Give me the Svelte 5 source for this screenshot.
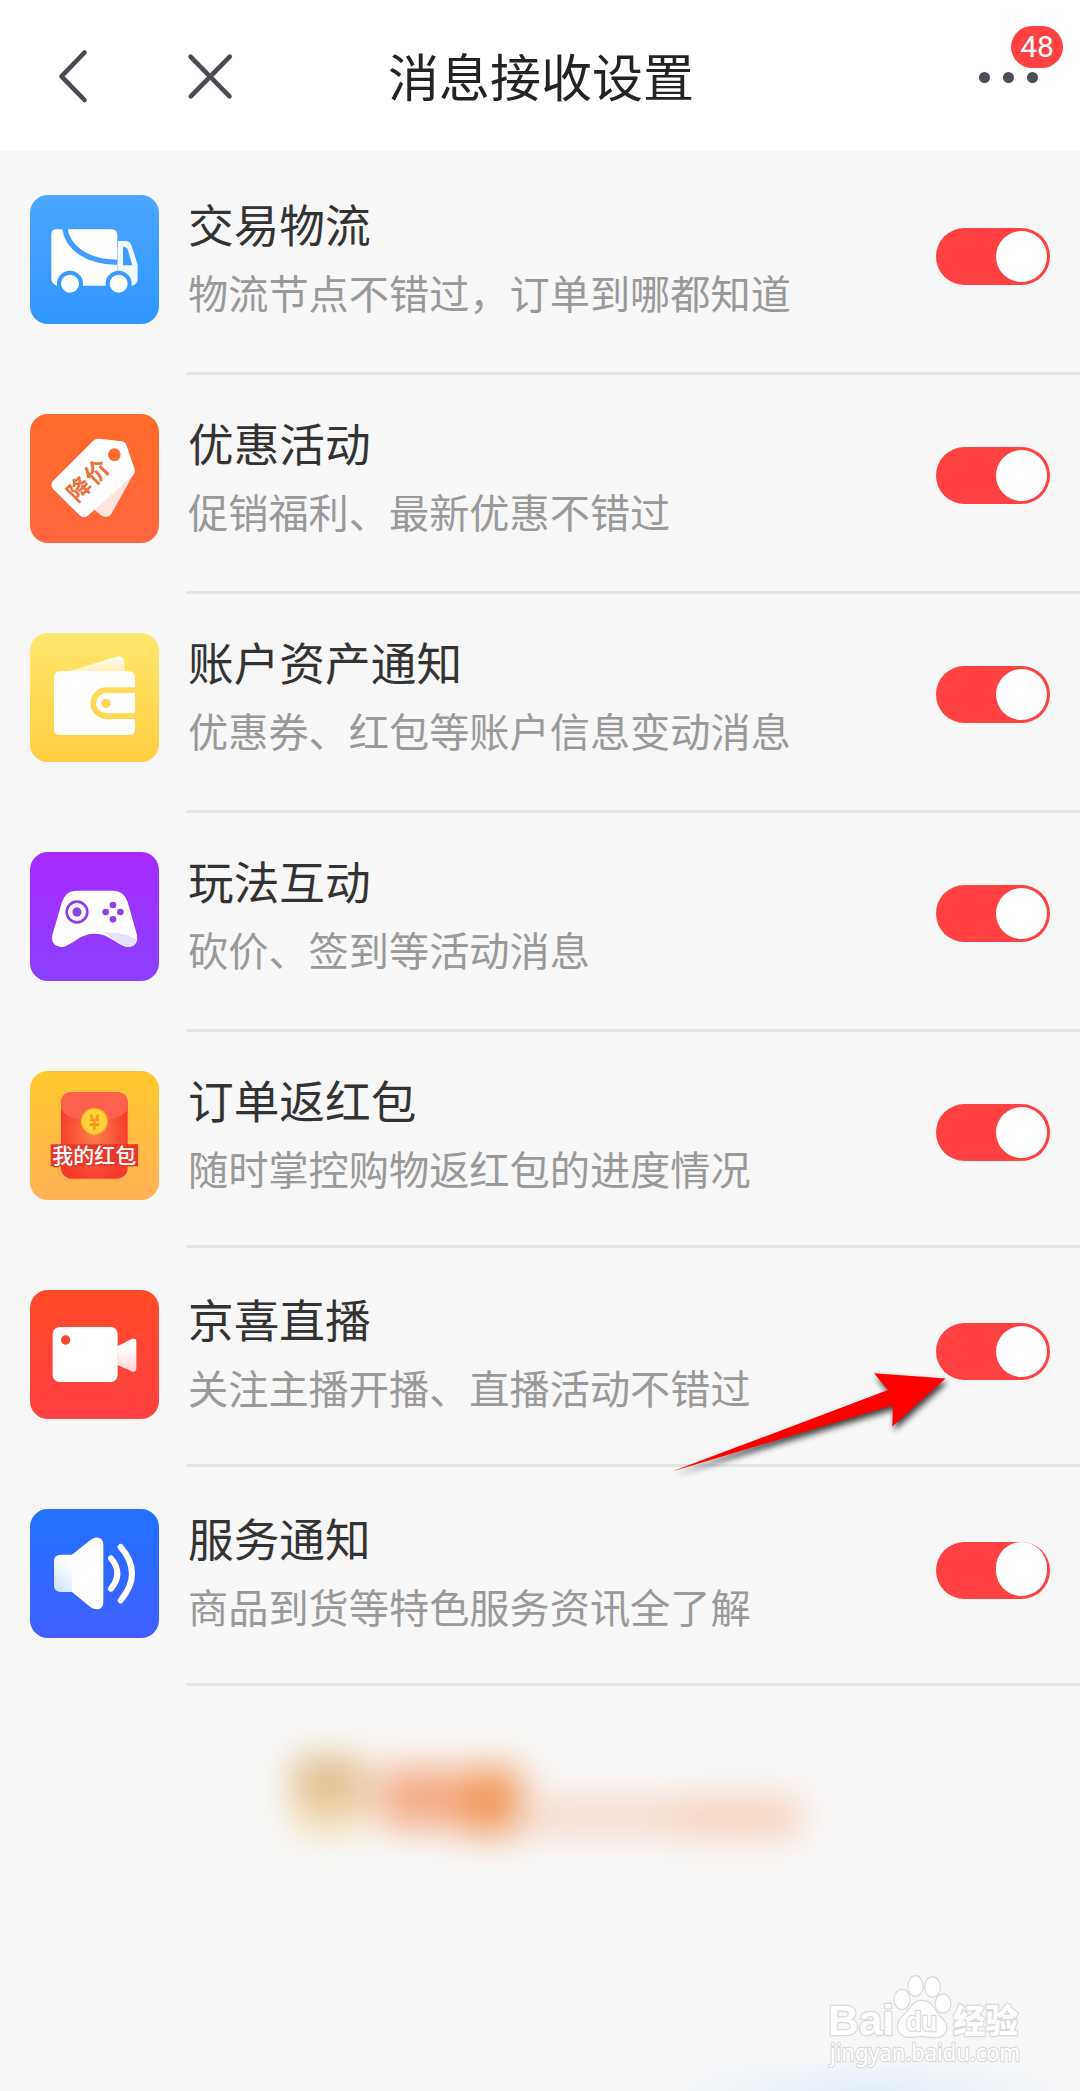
<script>
  const items = [
    { icon: 'truck', title: '交易物流', desc: '物流节点不错过，订单到哪都知道' },
    { icon: 'tag', title: '优惠活动', desc: '促销福利、最新优惠不错过' },
    { icon: 'wallet', title: '账户资产通知', desc: '优惠券、红包等账户信息变动消息' },
    { icon: 'game', title: '玩法互动', desc: '砍价、签到等活动消息' },
    { icon: 'packet', title: '订单返红包', desc: '随时掌控购物返红包的进度情况' },
    { icon: 'camera', title: '京喜直播', desc: '关注主播开播、直播活动不错过' },
    { icon: 'speaker', title: '服务通知', desc: '商品到货等特色服务资讯全了解' }
  ];
  let enabled = $state(items.map(() => true));
</script>

<div class="page">
  <header class="topbar">
    <div class="side">
      <svg class="nav back" width="40" height="60" viewBox="0 0 40 60">
        <path d="M29.5 6.5 6.5 30.3 29.5 54" />
      </svg>
      <svg class="nav" width="60" height="60" viewBox="0 0 60 60">
        <path d="M10.5 10.7 49.5 50.3M49.8 10.7 10.8 50.3" />
      </svg>
    </div>
    <h1>消息接收设置</h1>
    <div class="side right">
      <div class="more">
        <i></i><i></i><i></i>
        <span class="badge">48</span>
      </div>
    </div>
  </header>

  <main>
    {#each items as item, i}
      <section class="row">
        <div class="icon {item.icon}">
          <svg viewBox="0 0 387 387">
            {#if item.icon === 'truck'}
              <path fill="#fff" d="M80 103H244Q262 103 262 121V272H80Q64 266 64 250V119Q64 103 80 103Z" />
              <path fill="none" stroke="#439dff" stroke-width="16" d="M105 101C111 152 164 202 264 202" />
              <path fill="#f0f8ff" fill-rule="evenodd" d="M264 138H286Q300 138 304 150L323 209V252Q323 268 307 272H225L262 228ZM279 155V211H307L293 163Q290 155 279 155Z" />
              <g fill="#fff" stroke="#389aff" stroke-width="12">
                <circle cx="120" cy="266" r="33" />
                <circle cx="266" cy="266" r="33" />
              </g>
            {:else if item.icon === 'tag'}
              <path fill="#ffe3de" d="M178 274 213 304Q232 316 244 300L312 178Z" />
              <path fill="#fff" d="M190 80Q197 73 207 74L275 82Q287 84 290 95L313 163Q317 176 309 184L175 304Q162 316 149 304L70 226Q58 214 69 201Z" />
              <circle cx="253" cy="122" r="19" fill="#ff6a37" />
              <text x="176" y="198" dy="25" transform="rotate(-45 176 198)" text-anchor="middle" class="sale">降价</text>
            {:else if item.icon === 'wallet'}
              <linearGradient id="note" x1="0" y1="0" x2="0" y2="1">
                <stop offset="0" stop-color="#fffdf0" />
                <stop offset="1" stop-color="#fff0b8" />
              </linearGradient>
              <path fill="url(#note)" d="M105 118 260 71Q277 66 282 82L286 118Z" />
              <path fill="#fff" d="M91 115H296Q315 115 315 134V163H229A47 47 0 0 0 229 258H315V288Q315 306 297 306H91Q72 306 72 288V134Q72 115 91 115Z" />
              <path fill="#fff" d="M315 180H229A30 30 0 0 0 229 241H315Z" />
              <circle cx="228" cy="211" r="14" fill="#ffd557" />
            {:else if item.icon === 'game'}
              <path fill="#fff" d="M138 116H250Q282 117 293 150L321 249Q326 281 296 285 285 285 275 279C247 265 229 245 193 245S139 266 112 280Q101 287 89 284 61 279 67 249L96 150Q107 117 138 116Z" />
              <path fill="#e6e2fd" d="M220 242C260 238 301 250 319 262Q318 283 296 285 285 285 275 279C255 269 242 248 220 242Z" />
              <circle cx="141" cy="180" r="31" fill="none" stroke="#8f3fea" stroke-width="8" />
              <g fill="#8f3fea">
                <circle cx="141" cy="180" r="14" />
                <circle cx="249" cy="159" r="10" /><circle cx="249" cy="202" r="10" />
                <circle cx="227" cy="180" r="10" /><circle cx="271" cy="180" r="10" />
              </g>
            {:else if item.icon === 'packet'}
              <radialGradient id="glow" cx="0.5" cy="0.5" r="0.55">
                <stop offset="0" stop-color="#ff7d4d" />
                <stop offset="1" stop-color="#f53a2b" />
              </radialGradient>
              <rect x="93" y="64" width="200" height="259" rx="32" fill="url(#glow)" />
              <path fill="#fb614d" d="M93 115V96Q93 64 125 64H261Q293 64 293 96V115C270 162 116 162 93 115Z" />
              <circle cx="193" cy="151" r="39" fill="#ffd23c" stroke="#f9a927" stroke-width="4" />
              <path fill="none" stroke="#f29a1e" stroke-width="8" d="M182 131 188 143M205 131 199 143M179 147H208M179 161H208M193 144V176" />
              <path fill="#e9382b" d="M62 220H324V286H62Z" />
              <text x="193" y="276" text-anchor="middle" class="mine">我的红包</text>
            {:else if item.icon === 'camera'}
              <linearGradient id="lens" x1="0" y1="0" x2="0" y2="1">
                <stop offset="0.3" stop-color="#fff" />
                <stop offset="1" stop-color="#ffd2d4" />
              </linearGradient>
              <path fill="url(#lens)" d="M262 169 305 147Q319 143 319 156V234Q319 249 305 244L262 225Z" />
              <rect x="68" y="111" width="195" height="165" rx="21" fill="#fff" />
              <circle cx="107" cy="150" r="14" fill="#f9482f" />
            {:else}
              <linearGradient id="magnet" x1="0.7" y1="0" x2="0.2" y2="1">
                <stop offset="0.2" stop-color="#fff" />
                <stop offset="1" stop-color="#cfe2ff" />
              </linearGradient>
              <path fill="url(#magnet)" d="M92 137H140V249H92Q72 249 72 229V157Q72 137 92 137Z" />
              <path fill="#fff" d="M126 137 181 93Q195 81 210 88 220 94 220 107V280Q220 293 210 299 195 305 181 294L126 249Z" />
              <path fill="none" stroke="#fff" stroke-width="18" stroke-linecap="round" d="M243 148Q281 193 243 239M272 114Q340 193 272 274" />
            {/if}
          </svg>
        </div>
        <div class="body">
          <div class="texts">
            <h2>{item.title}</h2>
            <p>{item.desc}</p>
          </div>
          <button
            class="switch"
            class:on={enabled[i]}
            role="switch"
            aria-checked={enabled[i]}
            aria-label={item.title}
            onclick={() => (enabled[i] = !enabled[i])}
          ><span></span></button>
        </div>
      </section>
    {/each}
  </main>

  <div class="promo">
    <svg width="600" height="200" viewBox="0 0 600 200">
      <defs>
        <filter id="soft" x="-30%" y="-60%" width="160%" height="220%">
          <feGaussianBlur stdDeviation="18" />
        </filter>
      </defs>
      <g filter="url(#soft)">
        <rect x="54" y="58" width="68" height="48" fill="#dfb983" />
        <rect x="54" y="100" width="64" height="32" fill="#f2daab" />
        <rect x="122" y="70" width="22" height="50" fill="#f5dcc4" />
        <rect x="144" y="68" width="62" height="60" fill="#f5a880" />
        <rect x="206" y="72" width="14" height="54" fill="#f5b48e" />
        <rect x="218" y="68" width="64" height="66" fill="#f39a5c" />
        <rect x="290" y="98" width="272" height="36" fill="#f5d9c8" />
        <rect x="440" y="98" width="114" height="38" fill="#f6cfba" />
      </g>
    </svg>
  </div>

  <div class="bottom-glow"></div>

  <svg class="pointer" width="300" height="130" viewBox="660 1360 300 130">
    <path d="M672 1471.6 888 1390 874 1373.3 945.5 1378.5 892.3 1426.5 893 1405.3Z" />
  </svg>

  <svg class="watermark" width="220" height="110" viewBox="820 1970 220 110">
    <g class="mark">
      <text x="828" y="2034.5" class="bai" textLength="66" lengthAdjust="spacingAndGlyphs">Bai</text>
      <ellipse cx="902" cy="1999.5" rx="7.3" ry="9.5" />
      <ellipse cx="915.5" cy="1986" rx="7" ry="9.7" />
      <ellipse cx="932.5" cy="1987" rx="7.3" ry="9.5" />
      <ellipse cx="943" cy="2003.5" rx="7.3" ry="9" />
      <path d="M922 2001C933 2001 934 2012 942 2019 951 2028 945 2037 935 2037 928 2037 924 2035 918 2036 909 2038 899 2037 898 2027 898 2018 904 2017 909 2010 913 2004 916 2001 922 2001Z" />
      <text x="906" y="2031" class="du" textLength="31" lengthAdjust="spacingAndGlyphs">du</text>
      <text x="953" y="2032.5" class="jy" textLength="65" lengthAdjust="spacingAndGlyphs">经验</text>
      <text x="830" y="2061" class="url" textLength="190" lengthAdjust="spacingAndGlyphs">jingyan.baidu.com</text>
    </g>
  </svg>
</div>

<style>
  :global(body) {
    margin: 0;
    background: #f7f7f7;
  }
  .page {
    position: relative;
    width: 1080px;
    height: 2091px;
    overflow: hidden;
    background: #f7f7f7;
    font-family: 'Noto Sans CJK SC', sans-serif;
  }
  .topbar {
    display: flex;
    align-items: center;
    justify-content: space-between;
    height: 150px;
    box-sizing: border-box;
    padding: 2px 42px 0 55px;
    background: #fff;
  }
  .side {
    display: flex;
    align-items: center;
    width: 250px;
  }
  .right {
    justify-content: flex-end;
    width: 261px;
  }
  .nav {
    flex: none;
    fill: none;
    stroke: #484c52;
    stroke-width: 4.6;
    stroke-linecap: round;
    stroke-linejoin: round;
  }
  .back {
    margin-right: 85px;
  }
  h1, h2, p {
    margin: 0;
    font-weight: 400;
    white-space: nowrap;
  }
  h1 {
    flex: 1;
    padding-bottom: 3px;
    text-align: center;
    font-size: 51px;
    line-height: 70px;
    color: #232326;
  }
  .more {
    position: relative;
    display: flex;
    gap: 13px;
    margin-top: 3px;
  }
  .more i {
    width: 11px;
    height: 11px;
    border-radius: 50%;
    background: #4b4e55;
  }
  .badge {
    position: absolute;
    left: 32px;
    bottom: 15px;
    width: 52px;
    height: 42px;
    border-radius: 21px;
    background: #ff4142;
    color: #fff;
    font: 30px/42px Roboto, sans-serif;
    text-align: center;
  }
  main {
    padding-top: 6px;
  }
  .row {
    display: flex;
    box-sizing: border-box;
    height: 219px;
    padding: 39px 0 0 30px;
  }
  .row:nth-child(5) {
    height: 216px;
  }
  .row:nth-child(n + 6) {
    padding-top: 42px;
  }
  .icon {
    flex: none;
    width: 129px;
    height: 129px;
    margin-right: 27px;
    border-radius: 18px;
    overflow: hidden;
  }
  .icon svg {
    display: block;
    width: 100%;
    height: 100%;
  }
  .truck { background: linear-gradient(#4da6ff, #3096ff); }
  .tag { background: linear-gradient(#ff6b29, #ff6640); }
  .wallet { background: linear-gradient(#ffe76d, #ffcd40); }
  .game { background: linear-gradient(#a829ff, #8b40ff); }
  .packet { background: linear-gradient(#ffc92d, #ffb155); }
  .camera { background: linear-gradient(#ff4a28, #ff4143); }
  .speaker { background: linear-gradient(#2171ff, #4060ff); }
  .sale {
    font-size: 70px;
    font-weight: 700;
    fill: #ec6f3e;
    letter-spacing: 4px;
  }
  .mine {
    font-size: 63px;
    font-weight: 500;
    fill: #fff;
    stroke: #e9382b;
    stroke-width: 8px;
    paint-order: stroke;
  }
  .body {
    display: flex;
    flex: 1;
    justify-content: space-between;
    padding-right: 30px;
    border-bottom: 3px solid #e4e4e4;
  }
  .texts {
    padding-left: 2px;
  }
  h2 {
    font-size: 45.7px;
    line-height: 66px;
    color: #333;
    margin-top: -5px;
  }
  p {
    font-size: 40.2px;
    line-height: 58px;
    color: #999;
    margin-top: 7px;
  }
  .switch {
    display: flex;
    justify-content: flex-start;
    box-sizing: border-box;
    width: 114px;
    height: 57px;
    margin: 33px 0 0;
    padding: 3px;
    border: 0;
    border-radius: 29px;
    background: #ccc;
  }
  .switch.on {
    justify-content: flex-end;
    background: #ff4142;
  }
  .switch span {
    width: 51px;
    height: 51px;
    border-radius: 26px;
    background: #fff;
  }
  .row:last-child .switch {
    padding-top: 0;
  }
  .row:last-child .switch span {
    height: 54px;
  }
  .promo {
    display: flex;
    justify-content: center;
    padding-top: 14px;
  }
  .bottom-glow {
    position: absolute;
    left: 640px;
    bottom: 0;
    width: 460px;
    height: 40px;
    background: radial-gradient(ellipse 50% 100% at 50% 100%, #e2edfa, #edf2f8 45%, #f7f7f700);
  }
  .pointer {
    position: absolute;
    left: 660px;
    top: 1360px;
    fill: #f00;
    filter: drop-shadow(2px 4px 3px rgba(0, 0, 0, 0.75));
  }
  .watermark {
    position: absolute;
    left: 820px;
    top: 1970px;
  }
  .mark {
    fill: #fff;
    stroke: #d9d9d9;
    stroke-width: 2.4px;
    paint-order: stroke;
    stroke-linejoin: round;
  }
  .bai {
    font: 700 43px 'Liberation Sans', sans-serif;
  }
  .du {
    font: 700 27px 'Liberation Sans', sans-serif;
  }
  .jy {
    font-size: 33px;
    font-weight: 900;
  }
  .url {
    font: 24px 'Noto Sans', sans-serif;
  }
</style>
